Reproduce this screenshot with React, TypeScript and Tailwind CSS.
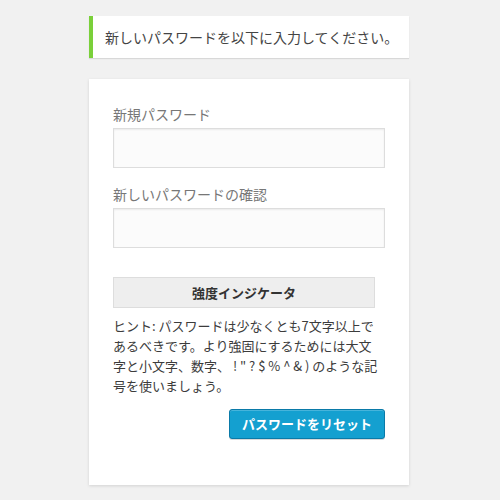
import React from 'react';

const font = { fontFamily: '"Noto Sans CJK JP", "Noto Sans", sans-serif' };

export default function App() {
  return (
    <div
      className="min-h-[500px] w-[500px] bg-[#f1f1f1] pt-4 text-[#444] antialiased"
      style={font}
    >
      <div className="ml-[89px] w-[320px]">
        {/* notice */}
        <div className="flex h-[42px] items-center border-l-4 border-[#7ad03a] bg-white pl-3 text-[14px] leading-[21px] shadow-[0_1px_1px_rgba(0,0,0,0.1)]">
          新しいパスワードを以下に入力してください。
        </div>

        {/* form */}
        <form className="mt-[21px] bg-white px-6 pb-[46px] pt-[25px] shadow-[0_1px_3px_rgba(0,0,0,0.13)]">
          <label className="block text-[14px] leading-[21px] text-[#777]">新規パスワード</label>
          <input
            type="password"
            className="mt-[3px] block h-[40px] w-full border border-[#ddd] bg-[#fbfbfb] shadow-[inset_0_1px_2px_rgba(0,0,0,0.07)] outline-none"
          />

          <label className="mt-4 block text-[14px] leading-[21px] text-[#777]">新しいパスワードの確認</label>
          <input
            type="password"
            className="mt-[3px] block h-[40px] w-full border border-[#ddd] bg-[#fbfbfb] shadow-[inset_0_1px_2px_rgba(0,0,0,0.07)] outline-none"
          />

          <div className="mt-[29px] flex h-[31px] w-[262px] items-center justify-center border border-[#ddd] bg-[#eee] text-[13px] font-bold text-[#333]">
            強度インジケータ
          </div>

          <p className="mt-2 w-[268px] text-[13px] leading-[20px] text-[#3c3c3c]">
            ヒント: パスワードは少なくとも7文字以上であるべきです。より強固にするためには大文字と小文字、数字、 ! " ? $ % ^ &amp; ) のような記号を使いましょう。
          </p>

          <div className="mt-[13px] flex justify-end">
            <button
              type="button"
              className="h-[30px] w-[156px] rounded-[3px] border border-[#0a7aa8] bg-[#14a0d0] text-[13px] font-bold text-white shadow-[inset_0_1px_0_rgba(120,200,230,0.5),0_1px_0_rgba(0,0,0,0.15)]"
            >
              パスワードをリセット
            </button>
          </div>
        </form>
      </div>
    </div>
  );
}
